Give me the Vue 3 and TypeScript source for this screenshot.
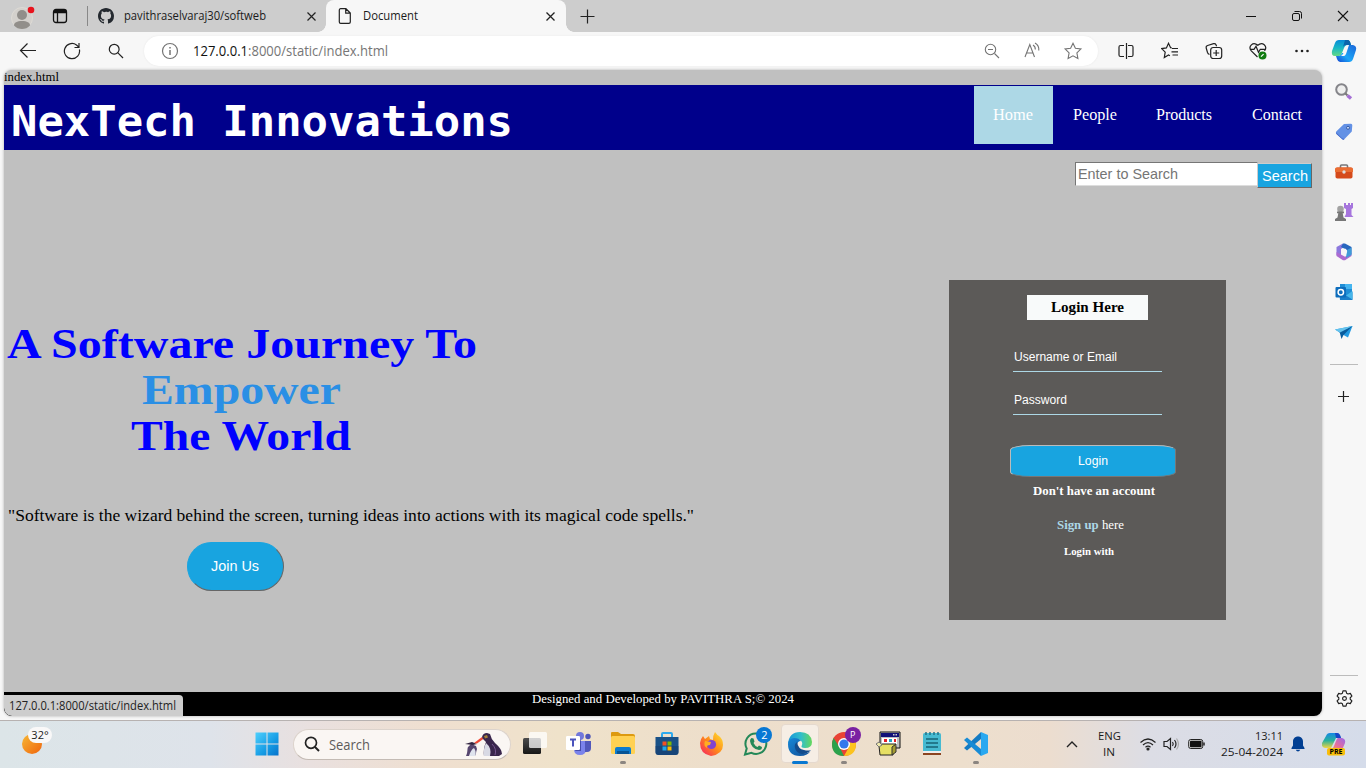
<script setup lang="ts">
import type { Directive } from 'vue'

interface NavItem { label: string; width: number; active?: boolean }

const navItems: NavItem[] = [
  { label: 'Home', width: 40, active: true },
  { label: 'People', width: 44 },
  { label: 'Products', width: 56 },
  { label: 'Contact', width: 50 },
]

/* Stretches a run of text to the given width in pixels. */
const vFit: Directive<HTMLElement, number> = {
  mounted(el, { value }) {
    const natural = el.getBoundingClientRect().width
    if (!natural) return
    el.style.transform = `scaleX(${value / natural})`
    el.style.marginRight = `${value - natural}px`
  },
}
</script>

<template>
  <div class="desktop">
    <header class="tabs">
      <div class="profile">
        <svg width="26" height="26" viewBox="0 0 26 26">
          <circle cx="12" cy="14" r="10.5" fill="#d3d0cc" stroke="#dedbd6" />
          <circle cx="12" cy="11" r="5" fill="#918e8a" />
          <path d="M4 21.500c0-3 3-4.500 8-4.500s8 1.500 8 4.500c-2 2.500-5 3.500-8 3.500s-6-1-8-3.500z" fill="#918e8a" />
          <circle cx="21" cy="6" r="3.300" fill="#e8131d" />
        </svg>
      </div>
      <svg class="workspaces" width="16" height="16" viewBox="0 0 16 16" fill="none" stroke="#111" stroke-width="1.300">
        <rect x="1.500" y="1.500" width="13" height="13" rx="2.500" /><path d="M1.500 4.500h13M5.500 5v9" />
        <path d="M2 3.200h12" stroke-width="2.500" />
      </svg>
      <i class="tab-line"></i>
      <div class="tab idle">
        <svg width="16" height="16" viewBox="0 0 16 16"><path fill="#24292f" d="M8 0C3.580 0 0 3.580 0 8c0 3.540 2.290 6.530 5.470 7.590.4.070.55-.17.55-.38 0-.19-.01-.82-.01-1.490-2.010.37-2.530-.49-2.690-.94-.09-.23-.48-.94-.82-1.130-.28-.15-.68-.52-.01-.53.63-.01 1.080.58 1.230.82.72 1.210 1.870.87 2.330.66.070-.52.28-.87.510-1.070-1.780-.2-3.640-.89-3.640-3.950 0-.87.31-1.590.82-2.150-.08-.2-.36-1.020.080-2.120 0 0 .67-.21 2.200.82A7.600 7.600 0 0 1 8 3.860c.68 0 1.360.09 2 .27 1.530-1.040 2.200-.82 2.200-.82.44 1.100.16 1.920.080 2.120.51.56.82 1.270.82 2.150 0 3.070-1.870 3.750-3.650 3.950.29.25.54.73.54 1.480 0 1.070-.01 1.930-.01 2.200 0 .21.15.46.55.38A8 8 0 0 0 16 8c0-4.420-3.580-8-8-8z" /></svg>
        <span class="tab-name"><span v-fit="142" class="fit">pavithraselvaraj30/softweb</span></span>
        <svg width="9" height="9" viewBox="0 0 9 9" stroke="#222" stroke-width="1.200"><path d="M.5.5l8 8M8.500.5l-8 8" /></svg>
      </div>
      <div class="tab active">
        <svg width="16" height="16" viewBox="0 0 16 16" fill="none" stroke="#222" stroke-width="1.200"><path d="M3.700.7h5.200l4.400 4.300v8.900q0 1.400-1.400 1.400H3.700q-1.400 0-1.400-1.400V2.100Q2.300.7 3.700.7zM8.700.8v4.400h4.500" /></svg>
        <span class="tab-name"><span v-fit="55" class="fit">Document</span></span>
        <svg width="9" height="9" viewBox="0 0 9 9" stroke="#222" stroke-width="1.300"><path d="M.5.5l8 8M8.500.5l-8 8" /></svg>
      </div>
      <svg class="plus" width="15" height="15" viewBox="0 0 15 15" stroke="#222" stroke-width="1.200"><path d="M7.500 .5v14M.5 7.500h14" /></svg>
      <div class="win-controls">
        <svg width="46" height="32" viewBox="0 0 46 32" stroke="#111" fill="none"><path d="M18 16.500h10" /></svg>
        <svg width="46" height="32" viewBox="0 0 46 32" stroke="#111" fill="none"><rect x="18.500" y="13.500" width="7" height="7" rx="1.500" /><path d="M20.500 11.500h5q2 0 2 2v5" /></svg>
        <svg width="46" height="32" viewBox="0 0 46 32" stroke="#111" fill="none" stroke-width="1.100"><path d="M18 11l10 10M28 11L18 21" /></svg>
      </div>
    </header>

    <div class="toolbar">
      <div class="cell"><svg width="18" height="18" viewBox="0 0 18 18" class="line"><path d="M17 8.500H1.500M8.500 1.500L1.500 8.500l7 7" /></svg></div>
      <div class="cell"><svg width="18" height="18" viewBox="0 0 18 18" class="line"><path d="M16.400 7.500A7.600 7.600 0 1 1 13.500 3L16 5.200M16 1v4.500h-4.500" /></svg></div>
      <div class="cell"><svg width="16" height="16" viewBox="0 0 16 16" class="line"><circle cx="6.200" cy="6.200" r="4.900" /><path d="M9.700 9.700l5.300 5.300" /></svg></div>
      <div class="address">
        <svg width="18" height="18" viewBox="0 0 18 18" fill="none" stroke="#747474" stroke-width="1.200"><circle cx="9" cy="9" r="7.500" /><path d="M9 8v5M9 5v1.500" stroke-width="1.500" /></svg>
        <span class="url"><span v-fit="195" class="fit">127.0.0.1<em>:8000/static/index.html</em></span></span>
        <div class="address-icons">
          <svg width="40" height="24" viewBox="0 0 40 24" class="soft"><circle cx="18.500" cy="10.500" r="5.200" /><path d="M22.500 14.500l4.500 4.500M16 10.500h5" /></svg>
          <svg width="41" height="24" viewBox="0 0 41 24" class="soft"><path d="M13 18l4.800-12.500L22.500 18M14.500 14h6.500M21 6q2.500 1.500 2.300 4.500M23 4q4.300 2.500 3.800 7.500" /></svg>
          <svg width="40" height="24" viewBox="0 0 40 24" class="soft"><path d="M20 4.200l2.400 5.100 5.500.7-4 3.900 1 5.600-4.900-2.700-4.900 2.700 1-5.600-4-3.900 5.500-.7z" /></svg>
        </div>
      </div>
      <div class="cell tail"><svg width="16" height="18" viewBox="0 0 16 18" class="line"><path d="M6 3.500H2.500Q1 3.500 1 5v8q0 1.500 1.500 1.500H6M10 3.500h3.500Q15 3.500 15 5v8q0 1.500-1.500 1.500H10M8.500 1v16" /></svg></div>
      <div class="cell"><svg width="18" height="18" viewBox="0 0 18 18" class="line"><path d="M10.800 6l-1.200-.3L7.500 1.300 5.400 5.900l-4.700.7 3.500 3.500L3.300 15.500l4.200-2.600 1.400.8M11 6.500h6M10.500 9.800H17M11.500 13H17" /></svg></div>
      <div class="cell"><svg width="18" height="18" viewBox="0 0 18 18" class="line"><path d="M4.500 12.500q-1.500-.5-2-2L1.200 6q-.4-2 1.400-2.500l6-1.800q1.700-.4 2.400 1l.6 1.600" /><rect x="5.700" y="5.500" width="11" height="11" rx="2.500" /><path d="M11.200 8v6M8.200 11h6" /></svg></div>
      <div class="cell"><svg width="18" height="18" viewBox="0 0 18 18" class="line"><path d="M8.500 15L2.300 8.800C-1.300 4.500 4-1 8.800 3.300c4.700-4.300 10.200 1 6.700 5.500M1 7.300h4l2-3 2.500 6 1.800-3H16" /><circle cx="13.500" cy="13.600" r="4" fill="#107c10" stroke="none" /><path d="M12 14.700l2.600-2.600" stroke="#fff" /></svg></div>
      <div class="cell"><svg width="16" height="4" viewBox="0 0 16 4" fill="#222"><circle cx="2.500" cy="2" r="1.300" /><circle cx="8" cy="2" r="1.300" /><circle cx="13.500" cy="2" r="1.300" /></svg></div>
      <svg class="copilot" width="26" height="24" viewBox="0 0 26 24">
        <defs>
          <linearGradient id="cpA" x1="0" y1="0" x2="0" y2="1"><stop stop-color="#078bd8" /><stop offset=".5" stop-color="#19b8c5" /><stop offset="1" stop-color="#63d884" /></linearGradient>
          <linearGradient id="cpB" x1="1" y1="0" x2="0" y2="1"><stop stop-color="#1c66d9" /><stop offset=".6" stop-color="#1aa5f7" /><stop offset="1" stop-color="#1542cf" /></linearGradient>
        </defs>
        <path d="M8 1h8q2 0 3 2l1 3h-3q-3 0-4 3l-2 5q-1 3-3 3H4Q0 17 1 12l3-8q1-3 4-3z" fill="url(#cpA)" />
        <path d="M20 6h2q4 1 3 5l-3 9q-1 3-4 3H9q-2 0-3-3l-1-3h3q2 0 3-3h3l3-8z" fill="url(#cpB)" />
        <path d="M15 7l-3 8-2 2h3q1 0 2-2l3-9h-1q-1 0-2 1z" fill="#f7f7f7" />
        <path d="M14 1h3q2 0 3 5h-5q-2 0-3 2z" fill="#0a65ab" />
      </svg>
    </div>

    <div class="workspace">
      <main class="page">
        <div class="file-line"><span v-fit="55" class="fit">index.html</span></div>
        <nav class="site-nav">
          <h1><span v-fit="502" class="fit">NexTech Innovations</span></h1>
          <ul>
            <li v-for="item in navItems" :key="item.label" :class="{ current: item.active }">
              <span v-fit="item.width" class="fit">{{ item.label }}</span>
            </li>
          </ul>
        </nav>
        <div class="site-search">
          <div class="field"><span v-fit="100" class="fit">Enter to Search</span></div>
          <button><span v-fit="46" class="fit">Search</span></button>
        </div>
        <div class="hero">
          <section class="pitch">
            <h2>
              <span class="row"><span v-fit="470" class="fit">A Software Journey To</span></span>
              <span class="row sky"><span v-fit="199" class="fit">Empower</span></span>
              <span class="row"><span v-fit="220" class="fit">The World</span></span>
            </h2>
            <p><span v-fit="686" class="fit">"Software is the wizard behind the screen, turning ideas into actions with its magical code spells."</span></p>
            <button><span v-fit="48" class="fit">Join Us</span></button>
          </section>
          <section class="login">
            <div class="login-title"><span v-fit="73" class="fit">Login Here</span></div>
            <div class="entry"><span v-fit="103" class="fit">Username or Email</span></div>
            <div class="entry second"><span v-fit="53" class="fit">Password</span></div>
            <button><span v-fit="30" class="fit">Login</span></button>
            <div class="ask"><span v-fit="122" class="fit">Don't have an account</span></div>
            <div class="signup"><span v-fit="67" class="fit"><b>Sign up</b> here</span></div>
            <div class="with"><span v-fit="50" class="fit">Login with</span></div>
          </section>
        </div>
        <footer><span v-fit="262" class="fit">Designed and Developed by PAVITHRA S;© 2024</span></footer>
        <div class="status"><span v-fit="167" class="fit">127.0.0.1:8000/static/index.html</span></div>
      </main>

      <aside class="sidebar">
        <svg viewBox="0 0 20 20"><circle cx="7.500" cy="7.500" r="5.300" fill="#eee" stroke="#85858a" stroke-width="2" /><path d="M11.500 11.500l2 2" stroke="#777" stroke-width="2" /><path d="M13.500 13.500l3.500 3" stroke="#a56fd5" stroke-width="3.500" /></svg>
        <svg viewBox="0 0 20 20"><path d="M10 2l7-.2q1.300.2 1.300 1.500l-.5 6.200L10.500 17q-1.300 1.200-2.600 0L2.300 11.500q-1-1.200.2-2.300z" fill="#6391e5" /><path d="M2 10.200l6 6 2.500.8-1.300 1L2.300 12z" fill="#4469ca" /><circle cx="14" cy="5.800" r="1.500" fill="#c9dcfc" stroke="#365da9" /></svg>
        <svg viewBox="0 0 20 20"><path d="M6.500 6V4q0-1 1-1h5q1 0 1 1v2" fill="none" stroke="#77777a" stroke-width="1.600" /><rect x="1.500" y="5.500" width="17" height="11" rx="1.800" fill="#d54a1b" /><path d="M1 7q0-1.500 1.500-1.500h15Q19 5.500 19 7v3H1z" fill="#ea6d33" /><circle cx="10" cy="10" r="1.700" fill="#ddd" /></svg>
        <svg viewBox="0 0 20 20"><path d="M10 1h2v2h2V1h2v2h1V1h2v5l-1.500 1v6l2 2h-9l1.500-3V7L10 6z" fill="#a675dd" /><circle cx="6.500" cy="7" r="3.300" fill="#a2a2a2" /><path d="M3 9.500h7v1.700H8.700l.8 4.300 2.500 1.500v2H1v-2l2.500-1.500.8-4.300H3z" fill="#777" /></svg>
        <svg viewBox="0 0 20 20"><path d="M9 1.500L2.500 5v8L7 15.500V7l5-3z" fill="#8c78dd" /><path d="M9 1.500l2 .1L17.500 5v7L13 14.500V8L7 5z" fill="#2866be" /><path d="M2.500 10v4L9 18.200h2l6.500-4.200v-3L11 14.800z" fill="#ac6bd0" /><path d="M13 8l4.500-2.500V13L12 16z" fill="#3f9bd8" /><path d="M8.700 6.800h3l1.500 3-1.500 3h-3l-1.600-3z" fill="#f7f7f7" /></svg>
        <svg viewBox="0 0 20 20"><path d="M6 2h11q1 0 1 1v13H6z" fill="#1f8ed6" /><path d="M11 2h7v5h-7z" fill="#45b5f0" /><path d="M5 9l8 5 5.500-4v8H6z" fill="#1a7fca" /><path d="M18.500 9v8.500L12 13.500z" fill="#46b6ea" /><rect x="1.500" y="5" width="10.500" height="10.500" rx="1" fill="#0d6dbc" /><circle cx="6.800" cy="10.200" r="2.700" fill="none" stroke="#fff" stroke-width="1.500" /></svg>
        <svg viewBox="0 0 20 20"><path d="M1 7.500L18.500 4 14 15.500 9.500 13z" fill="#229ae2" /><path d="M5.500 9.800L18.500 4 9.500 13l-2 4z" fill="#095b9c" /><path d="M1 7.500L18.500 4 6 10.500z" fill="#65c3ed" /></svg>
        <i class="side-line"></i>
        <svg class="line" viewBox="0 0 20 20"><path d="M9.500 4v11M4 9.500h11" /></svg>
        <i class="side-line low"></i>
        <svg class="line gear" viewBox="0 0 20 20"><path d="M8.400 2h3.200l.6 2.400 1.500.9 2.400-.7 1.700 2.900L16 9.200v1.600l1.800 1.700-1.700 2.900-2.400-.7-1.500.9-.6 2.400H8.400l-.6-2.400-1.500-.9-2.400.7-1.700-2.900L4 10.800V9.200L2.200 7.500l1.700-2.900 2.400.7 1.500-.9z" stroke-linejoin="round" /><circle cx="10" cy="10" r="2" /></svg>
      </aside>
    </div>

    <footer class="taskbar">
      <div class="weather"><svg width="32" height="30" viewBox="0 0 32 30"><defs><linearGradient id="sun" x1="0" x2="1" y2="1"><stop stop-color="#f6b936" /><stop offset="1" stop-color="#f0640c" /></linearGradient></defs><circle cx="10" cy="17" r="10" fill="url(#sun)" /></svg><span>32°</span></div>
      <svg class="start" width="24" height="24" viewBox="0 0 24 24"><defs><linearGradient id="win" x1="0" y1="0" x2="1" y2="1"><stop stop-color="#4fd0fd" /><stop offset=".6" stop-color="#159be4" /><stop offset="1" stop-color="#0872cb" /></linearGradient></defs><path fill="url(#win)" d="M.5.5h11v11H.5zM12.500.5h11v11h-11zM.5 12.500h11v11H.5zM12.500 12.500h11v11h-11z" /></svg>
      <div class="task-search">
        <svg width="16" height="16" viewBox="0 0 16 16" fill="none" stroke="#222" stroke-width="1.700"><circle cx="7" cy="6.800" r="5.500" /><path d="M11 11l4 4" stroke-width="2" /></svg>
        <span><span v-fit="41" class="fit">Search</span></span>
        <svg class="birds" width="40" height="25" viewBox="0 0 40 25">
          <path d="M3 24c2-4 1-7 2-9l3-3 5 2 1 3c-1 3-1 5-2 7z" fill="#56466f" /><path d="M6 24c1-4 3-7 5-8 2 3 2 5 1 8z" fill="#dfe3ed" /><path d="M2 12l8 1 4-1-5-2z" fill="#30233f" />
          <path d="M11 11l8-6 2 1.500-7 5z" fill="#ef4935" />
          <path d="M19 5q1-4 5-4l3 1q1 5 5 9 7 6 7 11l-3 2H21q-1-7 2-14l-3-3z" fill="#39264c" /><path d="M23 11q-3 6-2 13h6q2-8-4-13z" fill="#d8d9e4" /><path d="M21 4l3-1 1 2.500-3 1z" fill="#a68137" /><path d="M29 12q5 5 3 11" fill="none" stroke="#75558e" />
        </svg>
      </div>
      <div class="apps">
        <div><svg viewBox="0 0 26 26"><defs><linearGradient id="tv" x1="0" y1="0" x2="0" y2="1"><stop stop-color="#4c4c4c" /><stop offset="1" stop-color="#161616" /></linearGradient></defs><rect x="1" y="7" width="18" height="16" rx="1.500" fill="url(#tv)" /><rect x="7" y="1" width="18" height="16" rx="1.500" fill="#fff" opacity=".75" /></svg></div>
        <div><svg viewBox="0 0 26 26"><circle cx="14" cy="5" r="4" fill="#7278dc" /><circle cx="22" cy="5.500" r="2.700" fill="#4e55b8" /><path d="M8 10h12v8q0 6-6 6t-6-6z" fill="#7b83eb" /><path d="M19 10h6v7q0 4-4 4h-2z" fill="#5158bb" /><path d="M15 8v12H9" fill="#474eab" /><rect y="5" width="14" height="14" rx="1.200" fill="#fff" /><path d="M4 8.500h6M7 8.500v7" stroke="#4b53bc" stroke-width="2" /></svg></div>
        <div class="open"><svg viewBox="0 0 26 26"><path d="M1 2q0-1 1-1h6l3 2h12q2 0 2 2v5H1z" fill="#dd9a10" /><rect x="1" y="5" width="24" height="18" rx="1.500" fill="#ffd153" /><path d="M5 23v-5q0-2 2-2h12q2 0 2 2v5z" fill="#0e7bcd" /><path d="M7 20h12v3H7z" fill="#075494" /></svg></div>
        <div><svg viewBox="0 0 26 26"><path d="M8 7V3q0-1 1-1h8q1 0 1 1v4" fill="none" stroke="#2ca9ee" stroke-width="2" /><path d="M1.500 6h23v15q0 3-3 3h-17q-3 0-3-3z" fill="#195187" /><path d="M1.500 15h23v6q0 3-3 3h-17q-3 0-3-3z" fill="#163e70" opacity=".6" /><path d="M8.500 10.500h4v4h-4z" fill="#f25022" /><path d="M13.500 10.500h4v4h-4z" fill="#7fba00" /><path d="M8.500 15.500h4v4h-4z" fill="#20a7e9" /><path d="M13.500 15.500h4v4h-4z" fill="#ffb900" /></svg></div>
        <div><svg viewBox="0 0 26 26"><defs><linearGradient id="ff" x1="1" y1="0" x2="0" y2="1"><stop stop-color="#ffe735" /><stop offset=".5" stop-color="#ff8a19" /><stop offset="1" stop-color="#f5156c" /></linearGradient></defs><path d="M2 12q1-5 3-7l2 3 4-3 1 3 3 1q0-5 2-8 2 3 4 4 4 3 4 9 0 9-12 11Q2 23 2 12z" fill="url(#ff)" /><circle cx="13.500" cy="13.500" r="4.600" fill="#8144cf" /><path d="M7 10l6 1-1 3q-4 0-3 3-4-2-2-7z" fill="#ffad22" /></svg></div>
        <div><svg viewBox="0 0 26 26"><path d="M13 2.500a10.200 10.200 0 1 1-4.500 19.300L2 23.500l1.700-6A10.200 10.200 0 0 1 13 2.500z" fill="none" stroke="#248858" stroke-width="2" /><path d="M8.500 7l2 .5 1 3-1 1.500q1.500 3 4 4l1.500-1.500 3 1.500q0 3-3 3Q8 17.500 7 10q0-2 1.500-3z" fill="#248858" /></svg><b class="badge blue">2</b></div>
        <div class="focus"><svg viewBox="0 0 26 26"><defs><linearGradient id="edA" x1="0" y1="0" x2="1" y2="0"><stop stop-color="#1696d8" /><stop offset=".55" stop-color="#32bec9" /><stop offset="1" stop-color="#65d85a" /></linearGradient><linearGradient id="edB" x1="0" y1="0" x2="1" y2="1"><stop stop-color="#1687d7" /><stop offset="1" stop-color="#114e96" /></linearGradient></defs><path d="M1 13Q2 1 13 1t12 10q0 6-7 6-5 0-3-3 1-3-2-5-6-3-12 4z" fill="url(#edA)" /><path d="M1 13q0-5 6-6 5 0 7 3-4 0-4 5 0 6 6 7 5 1 8-3-3 6-11 6Q1 25 1 13z" fill="url(#edB)" /><path d="M10 11q-3 2-2 6 1 5 7 6 5 0 9-4-3 1-7 0-6-1-7-8z" fill="#124b8c" /></svg></div>
        <div class="open"><svg viewBox="0 0 26 26"><circle cx="13" cy="13" r="12" fill="#e94335" /><path d="M2.600 7L9 17l4 8Q1 25 1 13q0-3 1.600-6z" fill="#2ba24c" /><path d="M13 25q12 0 12-12 0-3-1-5H13l5 8z" fill="#fcc31e" /><circle cx="13" cy="13" r="6" fill="#fff" /><circle cx="13" cy="13" r="4.600" fill="#3478ed" /></svg><b class="badge purple">P</b></div>
        <div><svg viewBox="0 0 26 26"><path d="M5 1h20v16H5z" fill="#bfc0c1" stroke="#111" /><path d="M6 2h18v4H6z" fill="#111077" /><path d="M18 3h1.500v1.500H18zM20.500 3H22v1.500h-1.500z" fill="#ccc" /><path d="M7 7h15v8H7z" fill="#fff" /><path d="M9 8h3v3H9zM19 8h2v3h-2z" fill="#e41f28" /><path d="M14 8h3v3h-3z" fill="#23a3c4" /><path d="M4 15l3-2h14l-3 3v8H5z" fill="#e6df63" stroke="#222" /><path d="M1 13l3-2 3 3-3 2z" fill="#eee8aa" stroke="#777" /><path d="M17 16l4-3v8l-4 3z" fill="#a49c33" stroke="#333" /></svg></div>
        <div><svg viewBox="0 0 26 26"><rect x="4" y="2" width="18" height="22" rx="1.500" fill="#46bad1" /><path d="M4 22h18v2H4z" fill="#8c4520" /><path d="M4 20h18v2H4z" fill="#eee" /><path d="M7 1v3M11 1v3M15 1v3M19 1v3" stroke="#237389" stroke-width="1.500" /><path d="M7 8h12M7 12h12M7 16h12" stroke="#176477" stroke-width="1.500" /></svg></div>
        <div class="open"><svg viewBox="0 0 26 26"><path d="M18 1l7 3v18l-7 3z" fill="#29a8f0" /><path d="M18 1v7L4 19.500 1 17z" fill="#147bc3" /><path d="M18 25v-7L4 6.500 1 9z" fill="#188bd5" /></svg></div>
      </div>
      <div class="tray">
        <svg class="line" width="12" height="8" viewBox="0 0 12 8"><path d="M1 7l5-5 5 5" stroke-width="1.400" /></svg>
        <div class="lang"><span><span v-fit="23" class="fit">ENG</span></span><span><span v-fit="12" class="fit">IN</span></span></div>
        <svg class="line wifi" width="18" height="14" viewBox="0 0 18 14"><path d="M1.500 5.500q7.500-7 15 0M4 8q5-4.700 10 0M6.500 10.300q2.500-2.300 5 0" /><circle cx="9" cy="12" r="1" fill="#222" /></svg>
        <svg class="line sound" width="17" height="14" viewBox="0 0 17 14"><path d="M1 4.500h3L7.500 1.500v11L4 9.500H1zM9.500 5q1.500 2 0 4M11.500 3q3 4 0 8" /><path d="M13.500 1.500q4 5.500 0 11" stroke="#aaa" /></svg>
        <svg class="battery" width="18" height="12" viewBox="0 0 18 12"><rect x=".7" y="1.500" width="14" height="9" rx="2" fill="#ddd" stroke="#222" /><rect x="2" y="2.800" width="11.500" height="6.400" rx=".7" fill="#111" /><path d="M16 4.500v3" stroke="#222" stroke-width="1.500" /></svg>
        <div class="clock"><span><span v-fit="28" class="fit">13:11</span></span><span><span v-fit="62" class="fit">25-04-2024</span></span></div>
        <svg class="bell" width="14" height="16" viewBox="0 0 14 16" fill="#003e92"><path d="M7 .5c3 0 5 2.300 5 5v4l1.500 2.500v1H.5v-1L2 9.500v-4c0-2.700 2-5 5-5zM4.800 13.700h4.400Q8.500 15.500 7 15.500t-2.200-1.800z" /></svg>
        <svg class="copilot-pre" width="24" height="24" viewBox="0 0 24 24">
          <defs><linearGradient id="preA" x1="0" y1="0" x2="0" y2="1"><stop stop-color="#1687e5" /><stop offset=".5" stop-color="#28b19d" /><stop offset="1" stop-color="#efd443" /></linearGradient><linearGradient id="preB" x1="1" y1="0" x2="0" y2="1"><stop stop-color="#9968ea" /><stop offset=".6" stop-color="#e76e9b" /><stop offset="1" stop-color="#f89c56" /></linearGradient></defs>
          <path d="M8 1h7q2 0 3 3l1 2h-5L9 16H3q-4-1-3-5l4-7q1-3 4-3z" fill="url(#preA)" /><path d="M16 6h4q4 1 3 5l-3 7H9q2-1 3-4l2-5q1-3 2-3z" fill="url(#preB)" /><path d="M13 1h2q3 0 4 5h-5z" fill="#1646c9" />
          <rect x="5" y="16" width="18" height="7.500" rx="2" fill="#f8be0b" /><text x="14" y="22.300" text-anchor="middle" font-family="Open Sans, sans-serif" font-weight="700" font-size="7">PRE</text>
        </svg>
      </div>
    </footer>
  </div>
</template>

<style>
body { margin: 0; overflow: hidden; }
</style>

<style scoped>
.desktop { width: 1366px; height: 768px; display: flex; flex-direction: column; background: #f7f7f7; font-family: "Open Sans", "Noto Sans", sans-serif; overflow: hidden; color: #1b1b1b; }
.desktop * { box-sizing: border-box; }
svg { display: block; flex: none; }
.fit { display: inline-block; white-space: pre; transform-origin: left center; flex: none; }
.line { fill: none; stroke: #222; stroke-width: 1.200; }
.soft { fill: none; stroke: #747474; stroke-width: 1.100; }
button { font-family: "Liberation Sans", Arial, sans-serif; color: #fff; background: #18a4e0; padding: 0; display: flex; align-items: center; justify-content: center; }

.tabs { height: 32px; flex: none; display: flex; background: #cdcdcd; align-items: center; }
.profile { margin-left: 10px; width: 26px; }
.profile svg { margin-top: 1px; }
.workspaces { margin-left: 16px; }
.tab-line { width: 1px; height: 20px; background: #888; margin-left: 19px; }
.tab { height: 32px; display: flex; align-items: center; font-size: 12px; }
.tab-name { flex: 1; display: flex; padding-bottom: 1px; }
.idle { width: 238px; padding: 0 10px; gap: 10px; background: #cdcdcd; }
.active { width: 240px; padding: 0 11px; gap: 10px; background: #f7f7f7; border-radius: 8px 8px 0 0; position: relative; }
.active::before, .active::after { content: ""; position: absolute; bottom: 0; width: 8px; height: 8px; }
.active::before { left: -8px; background: radial-gradient(circle at 0 0, #cdcdcd 7.500px, #f7f7f7 8px); }
.active::after { right: -8px; background: radial-gradient(circle at 100% 0, #cdcdcd 7.500px, #f7f7f7 8px); }
.plus { margin-left: 14px; }
.win-controls { display: flex; margin-left: auto; }

.toolbar { height: 38px; flex: none; display: flex; align-items: center; padding-left: 6px; }
.cell { width: 44px; display: flex; justify-content: center; }
.address { margin-left: 6px; width: 954px; height: 30px; background: #fff; border-radius: 15px; display: flex; align-items: center; padding-left: 17px; box-shadow: 0 0 2px #e6e6e6; }
.url { font-size: 14px; margin-left: 14px; padding-bottom: 1px; color: #111; display: flex; }
.url em { font-style: normal; color: #767676; }
.address-icons { margin-left: auto; display: flex; padding-right: 5px; }
.tail { margin-left: 6px; }
.copilot { margin-left: 7px; }

.workspace { height: 650px; flex: none; display: flex; padding-left: 4px; }
.page { width: 1318px; height: 646px; background: #c0c0c0; border-radius: 8px; overflow: hidden; position: relative; display: flex; flex-direction: column; font-family: "Liberation Serif", "Times New Roman", serif; color: #000; box-shadow: 0 0 3px #aaa; }
.file-line { height: 15px; flex: none; font-size: 13px; line-height: 14px; }
.site-nav { height: 65px; flex: none; background: #00008b; display: flex; justify-content: space-between; padding-left: 7px; }
h1 { margin: 4px 0 0; font: bold 43px/65px "DejaVu Sans Mono", monospace; color: #fff; }
.site-nav ul { list-style: none; margin: 1px 0 0; padding: 0 1px 0 0; display: flex; height: 58px; }
.site-nav li { display: flex; align-items: center; padding: 0 19px 0 20px; color: #fff; font-size: 17px; }
.site-nav li:last-child { padding-left: 21px; }
.site-nav li.current { background: #add8e6; padding: 0 20px 0 19px; }
.site-search { height: 130px; flex: none; display: flex; justify-content: flex-end; padding: 12px 10px 0 0; font: 15px/20px "Liberation Sans", Arial, sans-serif; }
.field { width: 183px; height: 24px; background: #fff; border: 1px solid #767676; border-right-color: #ddd; border-bottom-color: #ddd; padding: 1px 2px; color: #757575; }
.site-search button { width: 55px; height: 25px; margin: 1px 0 0 -1px; padding-bottom: 1px; border: 1px solid; border-color: #ccc #666 #666 #ccc; font-size: 15px; }
.hero { flex: 1; display: flex; }
.pitch { width: 945px; padding: 41px 0 0 3px; }
h2 { margin: 0; width: 469px; font-size: 43px; line-height: 46px; color: #0000ff; }
.row { display: flex; justify-content: center; }
.row + .row { padding-right: 1px; }
.sky { color: #2a8fe5; }
.pitch p { margin: 46px 0 0 1px; font-size: 17px; line-height: 22px; display: flex; }
.pitch button { width: 97px; height: 49px; margin: 15px 0 0 180px; padding: 0 2px 2px 0; border: 1px solid; border-color: #18a4e0 #666 #666 #18a4e0; border-radius: 25px; font-size: 15px; }
.login { width: 277px; height: 340px; background: #5c5a58; color: #fff; display: flex; flex-direction: column; align-items: flex-start; padding-top: 15px; }
.login-title { width: 121px; height: 25px; margin-left: 78px; background: #f8fafa; color: #000; display: flex; justify-content: center; font-size: 15px; line-height: 25px; font-weight: bold; }
.entry { margin: 22px 0 0 64px; width: 149px; height: 30px; border-bottom: 1px solid #add8e6; display: flex; padding-left: 1px; font: 12px/30px "Liberation Sans", Arial, sans-serif; }
.entry.second { margin-top: 13px; }
.login button { width: 166px; height: 32px; margin: 30px 0 0 61px; border: 1px solid; border-color: #bbb #777 #777 #bbb; border-radius: 20px / 5px; font-size: 12px; }
.ask { margin: 6px 0 0 84px; font-size: 13px; line-height: 16px; font-weight: bold; }
.signup { margin: 18px 0 0 108px; font-size: 13px; line-height: 16px; }
.signup b { color: #add8e6; }
.with { margin: 11px 0 0 115px; font-size: 11px; line-height: 15px; font-weight: bold; }
.page > footer { height: 24px; flex: none; background: #000; color: #fff; display: flex; justify-content: center; font-size: 13px; line-height: 14px; }
.status { position: absolute; left: 0; bottom: 0; width: 179px; height: 21px; background: #cdcdcd; border-radius: 0 4px 0 8px; padding-left: 5px; font: 12px/21px "Open Sans", sans-serif; color: #222; }

.sidebar { width: 44px; display: flex; flex-direction: column; align-items: center; padding-top: 12px; }
.sidebar > svg { width: 20px; height: 20px; margin-bottom: 20px; }
.sidebar > svg:nth-of-type(7) { margin-bottom: 0; }
.side-line { width: 28px; height: 1px; background: #bcbcbc; margin: 22px 0; }
.side-line.low { margin: 248px 0 13px; }
.sidebar > svg.gear { width: 19px; height: 19px; margin: 0; }

.taskbar { height: 48px; flex: none; border-top: 1px solid #b7b2b1; padding-bottom: 1px; display: flex; align-items: center; background: linear-gradient(90deg, #dce5e8 0, #dee3ea 210px, #e9e0df 310px, #efdfd0 430px, #efe2ca 560px, #eddecb 720px, #eddfcd 960px, #ecddcf 1050px, #dcdde5 1150px, #d5dcea 1366px); }
.weather { margin-left: 22px; width: 40px; height: 36px; position: relative; }
.weather svg { margin-top: 1px; }
.weather span { position: absolute; left: 6px; top: 1px; width: 24px; height: 16px; border-radius: 8px; background: #f9f8f8; text-align: center; font-size: 11px; line-height: 16px; }
.start { margin-left: 193px; }
.task-search { margin-left: 14px; width: 218px; height: 31px; border-radius: 16px; border: 1px solid #dcd3cc; border-bottom-color: #c4bbb4; background: #faf6f3; display: flex; align-items: center; padding: 0 7px 0 10px; font-size: 14px; color: #5d5b5a; }
.task-search > span { margin-left: 9px; display: flex; }
.birds { margin-left: auto; }
.apps { display: flex; margin-left: 2px; }
.apps > div { width: 44.100px; height: 48px; display: flex; align-items: center; justify-content: center; position: relative; }
.apps svg { width: 26px; height: 26px; }
.apps .focus::before { content: ""; position: absolute; inset: 4px 3px 5px; background: #f6eee5; border: 1px solid #e5d9ce; border-radius: 4px; }
.focus svg { position: relative; }
.open::after, .focus::after { content: ""; position: absolute; bottom: 4px; width: 6px; height: 3px; border-radius: 2px; background: #8b8580; }
.focus::after { width: 16px; background: #0878d1; }
.badge { position: absolute; top: 7px; left: 23px; width: 16px; height: 16px; border-radius: 50%; color: #fff; text-align: center; font-size: 11px; line-height: 16px; font-weight: 400; }
.blue { background: #0878d4; }
.purple { background: #7a20a2; font-size: 9px; }
.tray { display: flex; align-items: center; margin-left: auto; padding-right: 20px; }
.lang { width: 26px; margin-left: 18px; margin-right: 1px; font-size: 11px; line-height: 16px; display: flex; flex-direction: column; align-items: center; }
.lang > span, .clock > span { display: flex; }
.wifi { margin-left: 16px; }
.sound { margin-left: 6px; }
.battery { margin-left: 8px; }
.clock { margin-left: 15px; display: flex; flex-direction: column; align-items: flex-end; font-size: 11px; line-height: 16px; }
.bell { margin-left: 8px; }
.copilot-pre { margin-left: 17px; }
</style>
